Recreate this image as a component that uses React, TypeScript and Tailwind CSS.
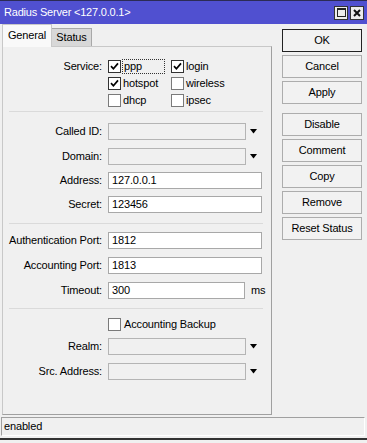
import React from "react";

function Box({ checked }: { checked?: boolean }) {
  return (
    <span
      className={`flex h-[13px] w-[13px] shrink-0 items-center justify-center border bg-white ${
        checked ? "border-[#333]" : "border-[#7a7a7a]"
      }`}
    >
      {checked && (
        <svg width="9" height="9" viewBox="0 0 9 9">
          <path d="M1 4.2 L3.4 6.8 L8 1.4" stroke="#000" strokeWidth="1.7" fill="none" />
        </svg>
      )}
    </span>
  );
}

function Arrow() {
  return (
    <svg width="8" height="5" viewBox="0 0 8 5" className="ml-[4px]">
      <path d="M0 0 H7 L3.5 4.5 Z" fill="#000" />
    </svg>
  );
}

function Label({ children }: { children: React.ReactNode }) {
  return <span className="w-[99px] shrink-0 text-right">{children}</span>;
}

function TextRow({ label, value, className = "" }: { label: string; value: string; className?: string }) {
  return (
    <div className={`flex h-[17px] items-center ${className}`}>
      <Label>{label}</Label>
      <span className="ml-[6px] flex h-[17px] w-[154px] items-center border border-[#a8a8a8] bg-white px-[3px]">
        {value}
      </span>
    </div>
  );
}

function DropRow({ label, className = "" }: { label: string; className?: string }) {
  return (
    <div className={`flex h-[17px] items-center ${className}`}>
      <Label>{label}</Label>
      <span className="ml-[6px] h-[17px] w-[138px] border border-[#b4b4b4] bg-[#f0f0f0]" />
      <Arrow />
    </div>
  );
}

function Sep({ className = "" }: { className?: string }) {
  return <div className={`ml-[6px] h-px w-[254px] bg-[#dadada] ${className}`} />;
}

const buttons = ["OK", "Cancel", "Apply", "Disable", "Comment", "Copy", "Remove", "Reset Status"];

export default function App() {
  return (
    <div className="relative h-[443px] w-[367px] overflow-hidden bg-[#f0f0f0] font-['Liberation_Sans',Arial,sans-serif] text-[11px] tracking-[-0.15px] text-black">
      {/* title bar */}
      <div className="flex h-[24px] items-center border-t border-[#2b2b55] bg-[#5050d0] pl-[4px] pr-[3px]">
        <span className="flex-1 text-white tracking-[-0.2px]">Radius Server &lt;127.0.0.1&gt;</span>
        <span className="flex h-[14px] w-[14px] items-center justify-center border border-[#333] bg-[#ececec]">
          <span className="h-[9px] w-[9px] border border-[#222] border-t-2" />
        </span>
        <span className="ml-[2px] flex h-[14px] w-[14px] items-center justify-center border border-[#333] bg-[#ececec]">
          <svg width="8" height="8" viewBox="0 0 8 8">
            <path d="M1 1 L7 7 M7 1 L1 7" stroke="#111" strokeWidth="2" />
          </svg>
        </span>
      </div>

      <div className="flex">
        <div className="ml-[2px] w-[270px]">
          {/* tabs */}
          <div className="flex h-[22px] items-end">
            <div className="relative z-10 -mb-px flex h-[23px] w-[50px] items-center justify-center border border-b-0 border-[#c8c8c8] bg-[#f9f9f9] pb-[2px]">
              General
            </div>
            <div className="flex h-[18px] w-[40px] items-center justify-center border border-b-0 border-l-0 border-[#a8a8a8] bg-[#d8d8d8]">
              Status
            </div>
          </div>

          {/* panel */}
          <div className="flex h-[369px] flex-col border border-[#c8c8c8] border-r-[#a0a0a0] border-b-[#a0a0a0] pt-[11px]">
            <div className="flex">
              <Label>
                <span className="flex h-[17px] items-center justify-end">Service:</span>
              </Label>
              <div className="ml-[6px] flex flex-col">
                <div className="flex h-[17px] items-center">
                  <span className="flex w-[63px] items-center">
                    <Box checked />
                    <span className="ml-px flex h-[15px] w-[43px] items-center border border-dotted border-[#333] pl-[1px]">ppp</span>
                  </span>
                  <Box checked />
                  <span className="ml-[2px]">login</span>
                </div>
                <div className="flex h-[17px] items-center">
                  <span className="flex w-[63px] items-center">
                    <Box checked />
                    <span className="ml-[2px]">hotspot</span>
                  </span>
                  <Box />
                  <span className="ml-[2px]">wireless</span>
                </div>
                <div className="flex h-[17px] items-center">
                  <span className="flex w-[63px] items-center">
                    <Box />
                    <span className="ml-[2px]">dhcp</span>
                  </span>
                  <Box />
                  <span className="ml-[2px]">ipsec</span>
                </div>
              </div>
            </div>

            <Sep className="mt-[2px]" />
            <DropRow label="Called ID:" className="mt-[11px]" />
            <DropRow label="Domain:" className="mt-[8px]" />
            <TextRow label="Address:" value="127.0.0.1" className="mt-[7px]" />
            <TextRow label="Secret:" value="123456" className="mt-[7px]" />

            <Sep className="mt-[10px]" />
            <TextRow label="Authentication Port:" value="1812" className="mt-[8px]" />
            <TextRow label="Accounting Port:" value="1813" className="mt-[8px]" />
            <div className="mt-[8px] flex h-[17px] items-center">
              <Label>Timeout:</Label>
              <span className="ml-[6px] flex h-[17px] w-[137px] items-center border border-[#a8a8a8] bg-white px-[3px]">
                300
              </span>
              <span className="ml-[6px]">ms</span>
            </div>

            <Sep className="mt-[9px]" />
            <div className="mt-[7px] flex h-[17px] items-center pl-[105px]">
              <Box />
              <span className="ml-[3px]">Accounting Backup</span>
            </div>
            <DropRow label="Realm:" className="mt-[5px]" />
            <DropRow label="Src. Address:" className="mt-[8px]" />
          </div>
        </div>

        {/* side buttons */}
        <div className="ml-[10px] flex w-[80px] flex-col pt-[5px]">
          {buttons.map((b, i) => (
            <div
              key={b}
              className={`flex h-[23px] items-center justify-center border bg-[#f2f2f2] ${
                i === 0 ? "border-[#222]" : "border-[#adadad]"
              } ${i === 0 ? "" : i === 3 ? "mt-[9px]" : "mt-[3px]"}`}
            >
              {b}
            </div>
          ))}
        </div>
      </div>

      {/* status bar */}
      <div className="ml-px mt-[2px] flex h-[19px] w-[364px] items-center border border-[#a0a0a0] border-r-white border-b-white pl-[2px]">
        enabled
      </div>
      <div className="mt-[2px] h-[2px] w-full bg-[#333]" />
    </div>
  );
}
